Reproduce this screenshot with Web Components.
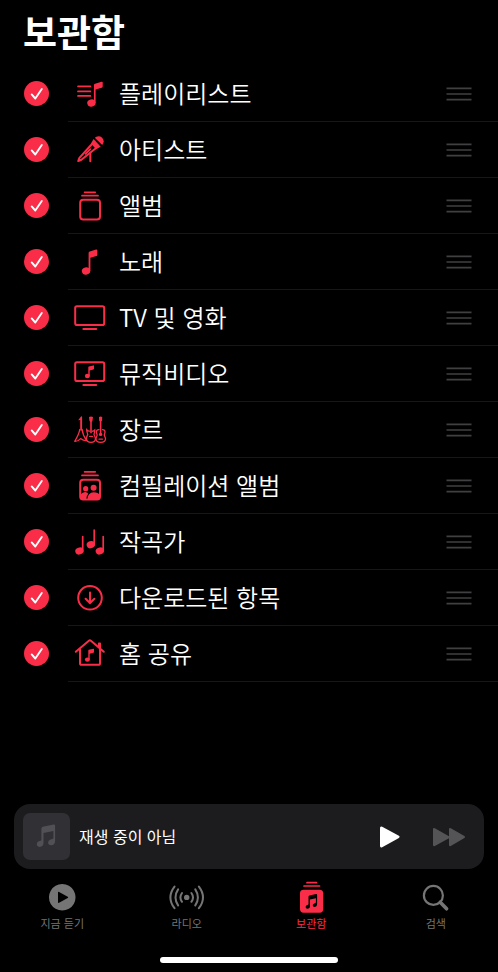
<!DOCTYPE html>
<html lang="ko">
<head>
<meta charset="utf-8">
<meta name="viewport" content="width=device-width, initial-scale=1">
<title>보관함</title>
<style>
html {
  background: #000;
}

body {
  margin: 0;
  background: #000;
  color: #fff;
  font-family: "Noto Sans CJK KR", "Noto Sans", sans-serif;
  --accent: #fa2d48;
  --muted: #757575;
}
</style>
</head>
<body>
<music-library></music-library>

<script>
// row icons, 36x36, drawn in currentColor
const ICONS = {
    playlist: `
<path class="line" d="M6 10.4h12.4M6 15.4h12.4M6 19.9h12.4"/>
<ellipse cx="19.4" cy="27" rx="4.2" ry="3.6" transform="rotate(-15 19.4 27)"/>
<path d="M21.9 9.2q0-1.2 1.2-1.5l6.4-1.9q1.2-.3 1.2.8v4q0 .9-.9 1.1l-6.2 1.7V27h-1.7z"/>`,
    mic: `
<path d="M22.8 5.8a5.1 5.1 0 0 1 7.4 7.2z"/>
<path d="M21.6 7.1l7.1 7.6-4.6 2.5-5.2-5.7z"/>
<path class="bold" d="M20 12L7.4 25.8l-1.2 3.2 3.2-1.3L23.8 16.2" stroke-linejoin="round"/>
<path class="line" d="M13.6 21.8l4.8-4.6"/>
<path class="bold" d="M18.3 21v8.2"/>`,
    album: `
<rect class="bold" x="8.2" y="11.8" width="19.8" height="19.8" rx="3"/>
<path class="line" d="M10 7.7h16M12.6 4.3h10.6"/>`,
    song: `
<ellipse cx="14" cy="27" rx="4.2" ry="3.6" transform="rotate(-15 14 27)"/>
<path d="M16.6 9q0-1.2 1.2-1.5l6.3-1.9q1.2-.3 1.2.8v4.5q0 .9-.9 1.1l-6 1.7V27h-1.8z"/>`,
    tv: `
<rect class="bold" x="3.2" y="6.2" width="29" height="18.8" rx="1.8"/>
<path class="bold" d="M11.4 29h12.8"/>`,
    video: `
<rect class="bold" x="3.2" y="6.2" width="29" height="18.8" rx="1.8"/>
<path class="bold" d="M11.4 29h12.8"/>
<ellipse cx="15.4" cy="20" rx="2.5" ry="2.2"/>
<path d="M16.3 11.2q0-.6.6-.8l4.3-1q.8-.2.8.5v2.8q0 .5-.6.7l-3.7 1V20h-1.4z"/>`,
    guitars: `
<path d="M6.2 8.2l2.8-3.8q.8-.6 1.1.3v13.8H8.2V8z"/>
<path class="thin" d="M7.8 17.4c-.7 4.5-2.7 8-5.1 11.9 2.4.2 4.2-.8 5.9-2.7 1.7 1.3 3.6 2.3 6.1 2-2.6-3.6-4.2-6.6-4.6-11.2" stroke-linejoin="round"/>
<path d="M17 5q2-.8 4 0l-.6 4-.6.8v11.4h-1.6V9.8l-.7-.8z"/>
<path class="thin" d="M17.6 19.2c-1.8.2-2.4-1-2.9-1.6-.2 2 .9 3.4 1 5-.7 1.4-1.5 2.8-1.2 4.5.3 2.3 1.9 3.2 4.5 3.2s4.1-.9 4.4-3.2c.2-1.8-.9-3.1-1.4-4.5.1-1.6 1-3 .8-4.6-.7.8-1.2 1.4-2.6 1.2M17.6 24.4h2.8"/>
<path d="M27 5q1.6-.9 3.2 0l-.1 3.6-.7.9v12h-1.6v-12l-.7-.9z"/>
<path class="thin" d="M27 17.6c-1.8 0-2.7 1-2.6 2.7.1 1.2.8 1.9.7 2.9-.1 1.2-1.2 2-1.1 3.8.1 2.3 1.8 3.3 4.7 3.3s4.6-1 4.8-3.3c.1-1.8-1-2.6-1.2-3.8-.1-1 .6-1.7.7-2.9.1-1.7-.9-2.7-2.6-2.7M27 27.2h3.4"/>
<circle cx="28.6" cy="22.4" r="1.7"/>`,
    compilation: `
<path class="line" d="M10 7.4h16M12.6 3.8h10.6"/>
<rect class="bold" x="8.2" y="11.8" width="19.8" height="19.6" rx="3"/>
<circle cx="13.7" cy="20.7" r="2.6"/>
<circle cx="21.6" cy="19.8" r="3"/>
<path d="M8 26.8q5.2-5 8.3-1-2.1 2.1-2.1 5.5H10q-2-.6-2-2z"/>
<path d="M15.7 31.3c-.4-4.1 2.3-7 5.9-7 3.2 0 5.3 1.3 6.4 3v2.2l-1.6 1.8z"/>`,
    composer: `
<ellipse cx="7.4" cy="27" rx="4.2" ry="3.5" transform="rotate(-18 7.4 27)"/>
<ellipse cx="18.8" cy="20.7" rx="4.2" ry="3.5" transform="rotate(-18 18.8 20.7)"/>
<ellipse cx="27.8" cy="27" rx="4.2" ry="3.5" transform="rotate(-18 27.8 27)"/>
<path class="line" d="M10.7 12.6V27M22.2 6.2v14.4M31.2 12.6V27"/>`,
    download: `
<circle class="bold" cx="18" cy="17.8" r="11.8"/>
<path class="bold" d="M18 12.4v10.4M13.6 18.8l4.4 4.2 4.4-4.2"/>`,
    home: `
<path class="bold" d="M3.8 15.8L16.9 4.7q1-.8 2 0l12.9 11.1" stroke-linejoin="round"/>
<path class="bold" d="M8 13.6v13.6q0 1.6 1.6 1.6h16.8q1.6 0 1.6-1.6V13.6"/>
<path d="M26 7.3q0-.8.8-.8h1.4q.8 0 .8.8v6.2l-3-2.6z"/>
<ellipse cx="15.4" cy="23.6" rx="2.5" ry="2.2"/>
<path d="M16.3 14.6q0-.6.6-.8l4.3-1q.8-.2.8.5v2.8q0 .5-.6.7l-3.7 1v5.8h-1.4z"/>`,
    note: `
<path d="M12.4 9.6q0-1.4 1.4-1.8l10.8-2.2q1.5-.2 1.5 1.2v14.9q0 4.3-3.8 4.5-3.2 0-3.2-2.7 0-2.1 2.4-2.9l2-.6q.9-.3.9-1.2V12l-9.9 2.1v9.6q0 4-4 4.2-2.7-.1-2.7-2.8 0-2.3 2.6-3l1.3-.4q.7-.3.7-1.1z"/>`,
    play: `<path d="M9 9.2q0-2.5 2.2-1.5l16.7 9q1.6 1 0 2.2l-16.7 9.3Q9 29.2 9 26.7z"/>`,
    forward: `
<path d="M2 10.4q0-2 1.8-1.1l14.2 7.9V10.4q0-2 1.8-1.1l13.6 7.8q1.4.9 0 1.9l-13.6 7.9q-1.8.9-1.8-1.1v-6.6L3.8 26.9Q2 27.8 2 25.8z"/>`,
    listen: `
<path fill-rule="evenodd" d="M18.2 4a13.3 13.3 0 1 0 .1 0zM14 12.7q0-1.2 1.1-.7l8.6 4.7q.9.7 0 1.3l-8.6 4.8q-1.1.5-1.1-.7z"/>`,
    radio: `
<circle cx="17.7" cy="17.4" r="2.7"/>
<path class="bold" d="M13 13q-3.2 4.4 0 8.8M22.4 13q3.2 4.4 0 8.8M9.1 9.4q-5.2 8 0 16M26.3 9.4q5.2 8 0 16M5.5 6.6q-8.2 10.8 0 21.6M29.9 6.6q8.2 10.8 0 21.6"/>`,
    library: `
<path class="line" d="M11 6h15.5M14 2.7h9.5"/>
<rect x="7" y="9.7" width="23.2" height="23" rx="3.6"/>
<path fill="#000" d="M15.5 16.6q0-1 1-1.2l6.6-1.4q1-.2 1 .8v9.4q0 2.6-2.4 2.8-2 0-2-1.8 0-1.4 1.6-1.8l1-.3q.6-.2.6-.8v-4l-5.9 1.3v6.3q0 2.6-2.6 2.8-1.8 0-1.8-1.8 0-1.5 1.7-2l.7-.2q.5-.2.5-.7z"/>`,
    search: `
<circle cx="15.4" cy="15.4" r="9.5" fill="none" stroke="currentColor" stroke-width="2.2"/>
<path d="M22.2 22.2l6.4 6.6" stroke="currentColor" stroke-width="3.6" stroke-linecap="round"/>`,
    grip: `<path d="M5.5 12.4h25M5.5 18h25M5.5 23.6h25" stroke="currentColor" stroke-width="1.7"/>`,
};

class MusicIcon extends HTMLElement {
    constructor() {
        super();
        this.attachShadow({ mode: "open" });
    }

    connectedCallback() {
        const name = this.getAttribute("name");

        this.shadowRoot.innerHTML = `
<style>
:host {
  display: block;
  flex: none;
  width: 36px;
  height: 36px;
}

svg {
  display: block;
  width: 100%;
  height: 100%;
  fill: currentColor;
}

.thin, .line, .bold {
  fill: none;
  stroke: currentColor;
  stroke-width: 1.7;
  stroke-linecap: round;
}

.thin {
  stroke-width: 1.3;
}

.bold {
  stroke-width: 2;
}
</style>
<svg viewBox="0 0 36 36" aria-hidden="true">${ICONS[name] || ""}</svg>
`;
    }
}

class LibraryRow extends HTMLElement {
    constructor() {
        super();
        this.attachShadow({ mode: "open" });
    }

    connectedCallback() {
        const icon = this.getAttribute("icon");

        this.shadowRoot.innerHTML = `
<style>
:host {
  display: flex;
  height: 56px;
}

label {
  flex: 1;
  display: flex;
  align-items: center;
}

.check {
  display: grid;
  flex: none;
  width: 25px;
  padding: 0 19px 1px 24px;
}

.check > * {
  grid-area: 1 / 1;
  width: 25px;
  height: 25px;
}

input {
  appearance: none;
  box-sizing: border-box;
  margin: 0;
  border: 2px solid #48484a;
  border-radius: 50%;
}

input:checked {
  border: 0;
  background: var(--accent);
}

.check svg {
  visibility: hidden;
  pointer-events: none;
}

input:checked + svg {
  visibility: visible;
}

.body {
  flex: 1;
  display: flex;
  align-items: center;
  gap: 11px;
  height: 56px;
  padding-left: 4px;
  font-size: 24px;
  font-weight: 350;
  line-height: 36px;
}

.name {
  padding-bottom: 2px;
}

.body, button {
  box-shadow: inset 0 -1px #171718;
}

music-icon {
  color: var(--accent);
}

button {
  display: flex;
  align-items: center;
  padding: 0 21px;
  border: 0;
  background: none;
  cursor: grab;
}

button music-icon {
  color: #404042;
}
</style>
<label>
  <span class="check">
    <input type="checkbox" checked>
    <svg viewBox="0 0 25 25" fill="none" stroke="#fff" stroke-width="1.9" stroke-linecap="round" stroke-linejoin="round" aria-hidden="true"><path d="M7.7 13.4l3.6 4.1 6.5-9.5"/></svg>
  </span>
  <span class="body">
    <music-icon name="${icon}"></music-icon>
    <span class="name"><slot></slot></span>
  </span>
</label>
<button type="button" aria-label="순서 변경"><music-icon name="grip"></music-icon></button>
`;
    }
}

class MiniPlayer extends HTMLElement {
    constructor() {
        super();
        this.attachShadow({ mode: "open" });
    }

    connectedCallback() {
        this.shadowRoot.innerHTML = `
<style>
:host {
  display: flex;
  align-items: center;
  margin: 0 14px;
  padding: 9px 17px 9px 9px;
  border-radius: 16px;
  background: #1c1c1e;
}

.art {
  display: grid;
  place-items: center;
  width: 47px;
  height: 47px;
  border-radius: 7px;
  background: #313034;
  color: #515055;
}

.title {
  flex: 1;
  padding: 0 0 2px 9px;
  font-size: 16px;
  font-weight: 400;
  line-height: 24px;
}

.controls {
  display: flex;
  gap: 24px;
}

button {
  padding: 0;
  border: 0;
  background: none;
  color: #fff;
  cursor: pointer;
}

button:disabled {
  color: #545456;
}
</style>
<span class="art"><music-icon name="note"></music-icon></span>
<span class="title"><slot></slot></span>
<div class="controls">
  <button type="button" aria-label="재생"><music-icon name="play"></music-icon></button>
  <button type="button" aria-label="다음" disabled><music-icon name="forward"></music-icon></button>
</div>
`;
    }
}

class TabItem extends HTMLElement {
    constructor() {
        super();
        this.attachShadow({ mode: "open" });
    }

    connectedCallback() {
        const icon = this.getAttribute("icon");
        const current = this.hasAttribute("current");

        this.shadowRoot.innerHTML = `
<style>
:host {
  display: block;
  flex: 1;
}

a {
  display: flex;
  flex-direction: column;
  align-items: center;
  color: ${current ? "var(--accent)" : "var(--muted)"};
  font-size: 11px;
  line-height: 14px;
  text-decoration: none;
}
</style>
<a href="#${icon}"${current ? ' aria-current="page"' : ""}>
  <music-icon name="${icon}"></music-icon>
  <slot></slot>
</a>
`;
    }
}

class MusicLibrary extends HTMLElement {
    constructor() {
        super();
        this.attachShadow({ mode: "open" });
    }

    connectedCallback() {
        this.shadowRoot.innerHTML = `
<style>
:host {
  display: flex;
  flex-direction: column;
  min-height: 100vh;
}

h1 {
  margin: 0;
  padding: 3px 23px 7px;
  font-size: 37px;
  font-weight: 700;
  line-height: 56px;
}

main {
  flex: 1;
}

nav {
  display: flex;
  padding-top: 11px;
}

.home-bar {
  width: 178px;
  height: 6px;
  margin: 27px auto 9px;
  border-radius: 3px;
  background: #fff;
}
</style>
<main>
  <h1>보관함</h1>
  <library-row icon="playlist">플레이리스트</library-row>
  <library-row icon="mic">아티스트</library-row>
  <library-row icon="album">앨범</library-row>
  <library-row icon="song">노래</library-row>
  <library-row icon="tv">TV 및 영화</library-row>
  <library-row icon="video">뮤직비디오</library-row>
  <library-row icon="guitars">장르</library-row>
  <library-row icon="compilation">컴필레이션 앨범</library-row>
  <library-row icon="composer">작곡가</library-row>
  <library-row icon="download">다운로드된 항목</library-row>
  <library-row icon="home">홈 공유</library-row>
</main>
<mini-player>재생 중이 아님</mini-player>
<nav>
  <tab-item icon="listen">지금 듣기</tab-item>
  <tab-item icon="radio">라디오</tab-item>
  <tab-item icon="library" current>보관함</tab-item>
  <tab-item icon="search">검색</tab-item>
</nav>
<div class="home-bar"></div>
`;
    }
}

customElements.define("music-icon", MusicIcon);
customElements.define("library-row", LibraryRow);
customElements.define("mini-player", MiniPlayer);
customElements.define("tab-item", TabItem);
customElements.define("music-library", MusicLibrary);
</script>
</body>
</html>
